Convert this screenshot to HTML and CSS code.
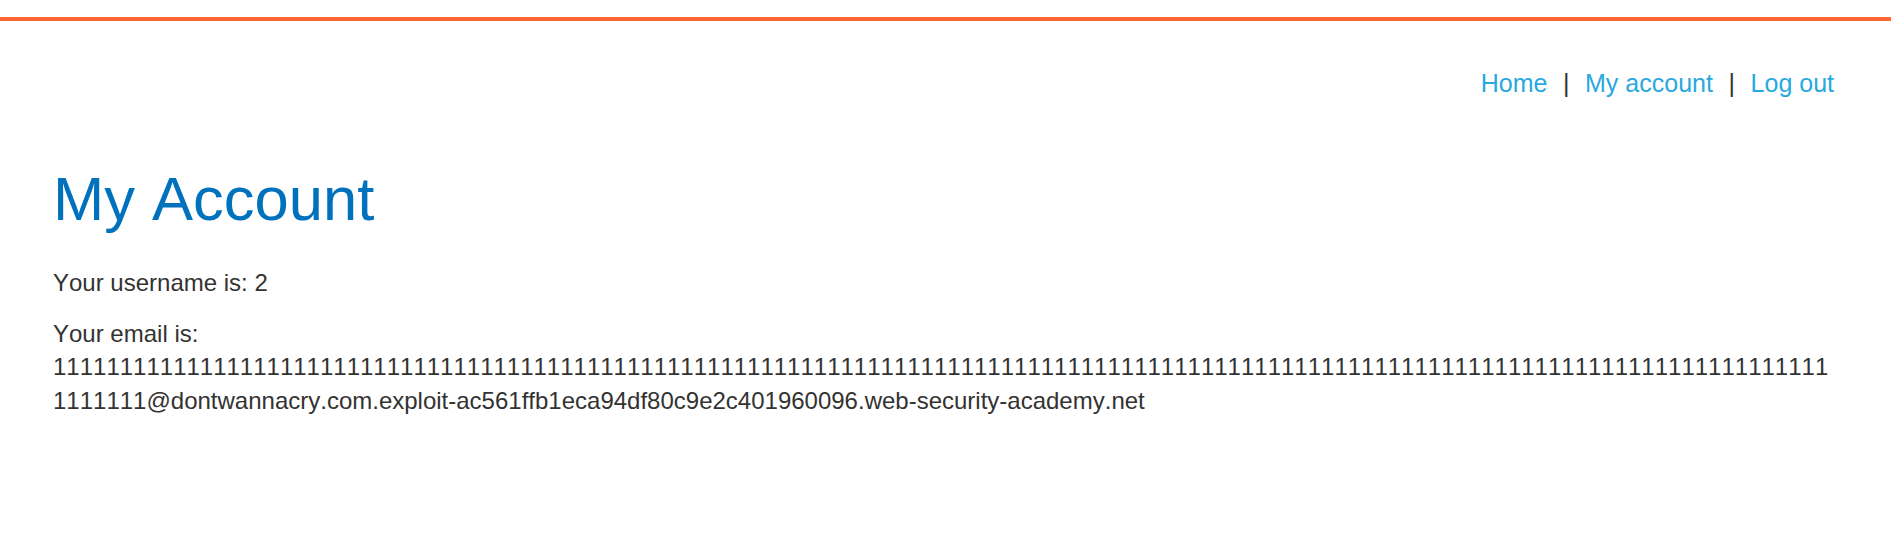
FILE: index.html
```html
<!DOCTYPE html>
<html lang="en">
<head>
<meta charset="utf-8">
<title>My Account</title>
<link rel="stylesheet" href="styles.css">
</head>
<body>
<div class="topbar"></div>
<div class="container">
  <header class="nav">
    <a href="#">Home</a>
    <span class="sep">|</span>
    <a href="#">My account</a>
    <span class="sep">|</span>
    <a href="#">Log out</a>
  </header>
  <h1 class="title">My Account</h1>
  <p class="info">Your username is: 2</p>
  <p class="info">Your email is: <span class="email">11111111111111111111111111111111111111111111111111111111111111111111111111111111111111111111111111111111111111111111111111111111111111111111@dontwannacry.com.exploit-ac561ffb1eca94df80c9e2c401960096.web-security-academy.net</span></p>
</div>
</body>
</html>
```

FILE: styles.css
```css
html, body {
  margin: 0;
  padding: 0;
  background: #ffffff;
}

body {
  font-family: "Liberation Sans", Arial, Helvetica, sans-serif;
  color: #333332;
  font-kerning: none;
}

.topbar {
  margin-top: 17px;
  height: 4px;
  background: #ff6633;
}

.container {
  padding: 0 57px 0 53px;
}

.nav {
  display: flex;
  justify-content: flex-end;
  align-items: baseline;
  gap: 15.6px;
  margin-top: 47px;
  font-size: 25px;
  line-height: 30px;
}

.nav a {
  color: #29a8e0;
  text-decoration: none;
}

.nav .sep {
  color: #333332;
}

.title {
  margin: 64px 0 30px 0;
  font-size: 61.5px;
  line-height: 74px;
  font-weight: normal;
  color: #0071bc;
}

.info {
  margin: 0 0 17px 0;
  font-size: 24px;
  line-height: 33.6px;
  overflow-wrap: break-word;
}
```
